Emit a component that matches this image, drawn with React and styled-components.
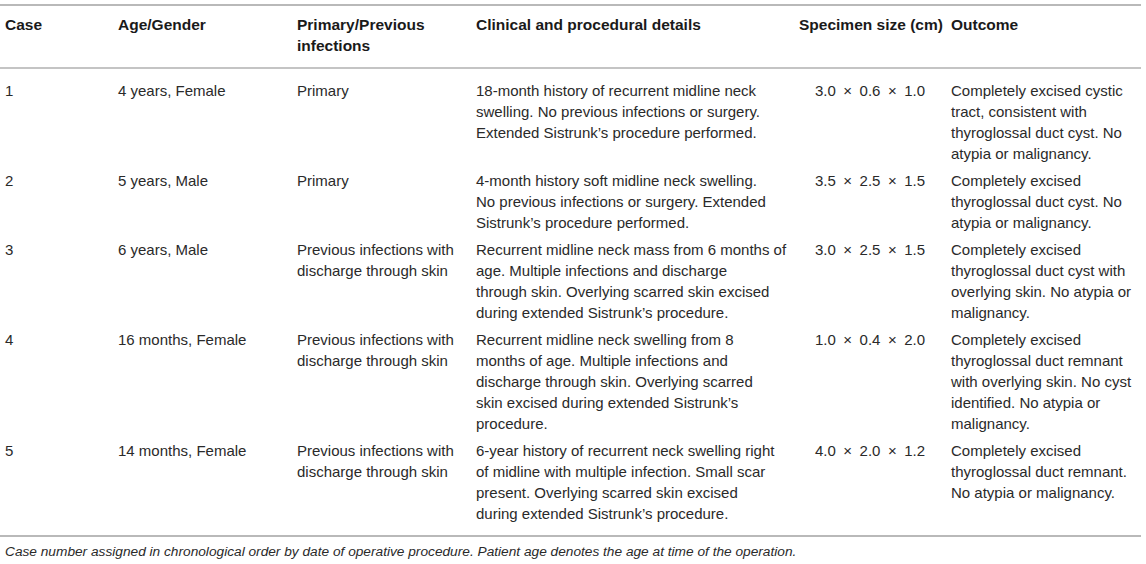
import React from 'react'
import styled, { createGlobalStyle } from 'styled-components'

const GlobalStyle = createGlobalStyle`
  body {
    margin: 0;
    background: #fff;
    font-family: "Liberation Sans", Arial, Helvetica, sans-serif;
    color: #2a2a2a;
  }
`

// styles
const Wrapper = styled.div`
  width: 1141px;
  padding-top: 4px;
`

const Table = styled.table`
  width: 100%;
  border-collapse: collapse;
  table-layout: fixed;
  font-size: 15px;
  line-height: 21px;
  border-top: 2px solid #b9b9b9;
  border-bottom: 2px solid #b9b9b9;
`

const HeadCell = styled.th`
  text-align: left;
  font-size: 15.5px;
  font-weight: bold;
  color: #1a1a1a;
  padding: 8px 5px 11px;
  vertical-align: top;
  white-space: nowrap;
  border-bottom: 2px solid #c4c4c4;
`

const Row = styled.tr`
  &:first-child td {
    padding-top: 11px;
  }

  &:last-child td {
    padding-bottom: 11px;
  }
`

const Cell = styled.td`
  text-align: ${({ center }) => (center ? 'center' : 'left')};
  vertical-align: top;
  padding: 3px 5px;
  white-space: nowrap;
  color: #2a2a2a;
`

const Note = styled.p`
  margin: 0;
  padding: 6px 5px;
  font-size: 13.7px;
  line-height: 18px;
  font-style: italic;
  color: #2a2a2a;
`

const columns = [
  { label: 'Case', width: 113 },
  { label: 'Age/Gender', width: 179 },
  { label: ['Primary/Previous', 'infections'], width: 179 },
  { label: 'Clinical and procedural details', width: 323 },
  { label: 'Specimen size (cm)', width: 152 },
  { label: 'Outcome' }
]

// en spaces around the multiplication sign, as in the source table
const dims = (a, b, c) => `${a}\u2002×\u2002${b}\u2002×\u2002${c}`

const rows = [
  {
    id: '1',
    age: '4 years, Female',
    type: ['Primary'],
    details: [
      '18-month history of recurrent midline neck',
      'swelling. No previous infections or surgery.',
      'Extended Sistrunk’s procedure performed.'
    ],
    size: dims('3.0', '0.6', '1.0'),
    outcome: [
      'Completely excised cystic',
      'tract, consistent with',
      'thyroglossal duct cyst. No',
      'atypia or malignancy.'
    ]
  },
  {
    id: '2',
    age: '5 years, Male',
    type: ['Primary'],
    details: [
      '4-month history soft midline neck swelling.',
      'No previous infections or surgery. Extended',
      'Sistrunk’s procedure performed.'
    ],
    size: dims('3.5', '2.5', '1.5'),
    outcome: [
      'Completely excised',
      'thyroglossal duct cyst. No',
      'atypia or malignancy.'
    ]
  },
  {
    id: '3',
    age: '6 years, Male',
    type: ['Previous infections with', 'discharge through skin'],
    details: [
      'Recurrent midline neck mass from 6 months of',
      'age. Multiple infections and discharge',
      'through skin. Overlying scarred skin excised',
      'during extended Sistrunk’s procedure.'
    ],
    size: dims('3.0', '2.5', '1.5'),
    outcome: [
      'Completely excised',
      'thyroglossal duct cyst with',
      'overlying skin. No atypia or',
      'malignancy.'
    ]
  },
  {
    id: '4',
    age: '16 months, Female',
    type: ['Previous infections with', 'discharge through skin'],
    details: [
      'Recurrent midline neck swelling from 8',
      'months of age. Multiple infections and',
      'discharge through skin. Overlying scarred',
      'skin excised during extended Sistrunk’s',
      'procedure.'
    ],
    size: dims('1.0', '0.4', '2.0'),
    outcome: [
      'Completely excised',
      'thyroglossal duct remnant',
      'with overlying skin. No cyst',
      'identified. No atypia or',
      'malignancy.'
    ]
  },
  {
    id: '5',
    age: '14 months, Female',
    type: ['Previous infections with', 'discharge through skin'],
    details: [
      '6-year history of recurrent neck swelling right',
      'of midline with multiple infection. Small scar',
      'present. Overlying scarred skin excised',
      'during extended Sistrunk’s procedure.'
    ],
    size: dims('4.0', '2.0', '1.2'),
    outcome: [
      'Completely excised',
      'thyroglossal duct remnant.',
      'No atypia or malignancy.'
    ]
  }
]

const Lines = ({ lines }) =>
  lines.map((line, i) => (
    <React.Fragment key={i}>
      {i > 0 && <br />}
      {line}
    </React.Fragment>
  ))

const App = () => (
  <Wrapper>
    <GlobalStyle />
    <Table>
      <colgroup>
        {columns.map((col, i) => (
          <col key={i} style={col.width ? { width: col.width } : undefined} />
        ))}
      </colgroup>
      <thead>
        <tr>
          {columns.map((col, i) => (
            <HeadCell key={i}>
              {Array.isArray(col.label) ? <Lines lines={col.label} /> : col.label}
            </HeadCell>
          ))}
        </tr>
      </thead>
      <tbody>
        {rows.map(row => (
          <Row key={row.id}>
            <Cell>{row.id}</Cell>
            <Cell>{row.age}</Cell>
            <Cell><Lines lines={row.type} /></Cell>
            <Cell><Lines lines={row.details} /></Cell>
            <Cell center>{row.size}</Cell>
            <Cell><Lines lines={row.outcome} /></Cell>
          </Row>
        ))}
      </tbody>
    </Table>
    <Note>
      Case number assigned in chronological order by date of operative procedure. Patient age denotes the age at time of the operation.
    </Note>
  </Wrapper>
)

export default App
